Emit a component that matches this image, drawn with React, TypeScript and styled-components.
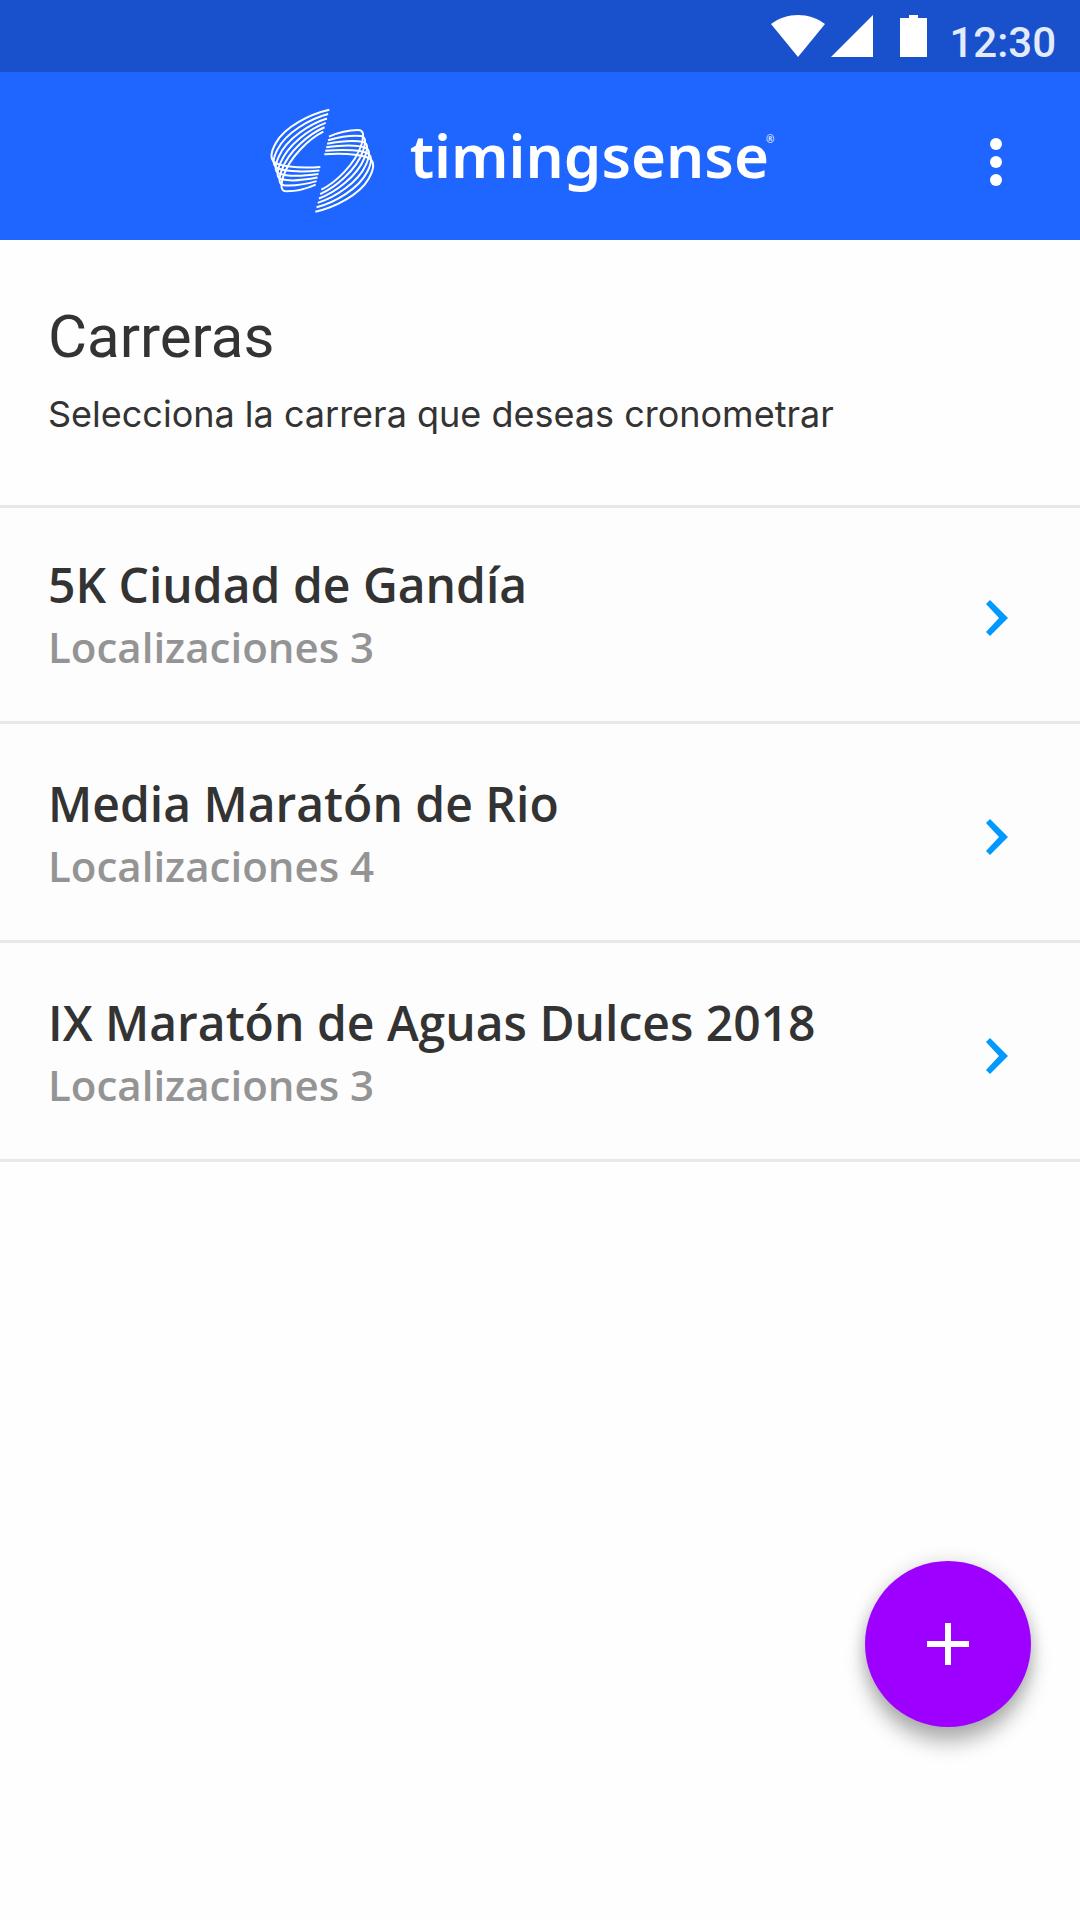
import React from "react";
import styled, { createGlobalStyle } from "styled-components";

const GlobalStyle = createGlobalStyle`
  *, *::before, *::after { box-sizing: border-box; }
  body {
    margin: 0;
    background: #fefefe;
    color: #333333;
    font-family: "Open Sans", "Noto Sans", sans-serif;
  }
  h1, h2, p, ul { margin: 0; padding: 0; }
`;

const Page = styled.div`
  min-height: 100vh;
`;

const StatusBar = styled.div`
  display: flex;
  align-items: flex-start;
  justify-content: flex-end;
  height: 72px;
  padding: 15px 24px 0 0;
  background: #1951cc;
  color: #ffffff;
`;

const StatusIcon = styled.svg<{ $gap: number }>`
  display: block;
  flex: none;
  margin-right: ${(p) => p.$gap}px;
  fill: currentColor;
`;

const Clock = styled.time`
  color: #e3ebfb;
  font: 500 42px/56px Roboto, sans-serif;
`;

const AppBar = styled.header`
  display: grid;
  grid-template-columns: 1fr auto 1fr;
  align-items: center;
  height: 168px;
  padding-top: 12px;
  padding-right: 36px;
  background: #1e66ff;
  color: #ffffff;
`;

const Brand = styled.a`
  grid-column: 2;
  display: flex;
  align-items: center;
  gap: 35px;
  padding-bottom: 4px;
  color: inherit;
  text-decoration: none;
`;

const Wordmark = styled.span`
  display: flex;
  align-items: flex-start;
  padding-bottom: 10px;
  font: 600 60px/72px "Noto Sans", sans-serif;
`;

const Registered = styled.span`
  margin-left: -3px;
  padding-top: 12px;
  font: 400 10px/16px "Noto Sans", sans-serif;
`;

const MenuButton = styled.button`
  display: grid;
  place-items: center;
  justify-self: end;
  width: 96px;
  height: 96px;
  padding: 0;
  border: 0;
  background: none;
  color: inherit;
  cursor: pointer;
`;

const Intro = styled.section`
  padding: 61px 48px 67px;
`;

const Heading = styled.h1`
  font: 400 60px/72px Roboto, sans-serif;
`;

const Hint = styled.p`
  margin-top: 17px;
  font: 400 36px/48px Inter, sans-serif;
`;

const RaceList = styled.ul`
  list-style: none;
  background: #fdfdfd;
  box-shadow: inset 0 3px 0 #e8e8e8;
`;

const RaceItem = styled.li`
  border-bottom: 3px solid #e8e8e8;
`;

const RaceLink = styled.a`
  display: flex;
  align-items: center;
  justify-content: space-between;
  padding: 47px 72px 46px 48px;
  color: inherit;
  text-decoration: none;
`;

const RaceName = styled.h2`
  font-weight: 600;
  font-size: 48px;
  line-height: 66px;
`;

const RaceDetail = styled.p`
  color: #949494;
  font-weight: 600;
  font-size: 42px;
  line-height: 57px;
`;

const Chevron = styled.svg`
  flex: none;
  margin-top: 8px;
  fill: #0099ff;
`;

const AddButton = styled.button`
  position: fixed;
  right: 49px;
  bottom: 193px;
  display: grid;
  place-items: center;
  width: 166px;
  height: 166px;
  padding: 0;
  border: 0;
  border-radius: 50%;
  background: #9e00ff;
  color: #ffffff;
  box-shadow: 0 16px 20px rgba(0, 0, 0, 0.28), 0 0 18px rgba(0, 0, 0, 0.14);
  cursor: pointer;
`;

/* Outermost and innermost strands of the emblem; the rest are spread evenly between them. */
const outerStrand = [208, 29, 150, 42, 75, 80, 48, 128, 32, 156, 30, 172, 40, 184, 52, 198, 110, 206, 181, 201];
const innerStrand = [190, 95, 150, 115, 88, 170, 69, 232, 62, 258, 62, 274, 80, 274, 115, 274, 145, 264, 167, 254];
const strandCount = 6;

const strands = Array.from({ length: strandCount }, (_, i) => {
  const t = i / (strandCount - 1);
  const p = outerStrand.map((v, k) => v + (innerStrand[k] - v) * t);
  return `M${p.slice(0, 2).join(" ")}C${p.slice(2).join(" ")}`;
});

function Emblem() {
  return (
    <svg width="105" height="105" viewBox="30 24 315 315" fill="none" stroke="currentColor" strokeWidth="6" aria-hidden="true">
      <g id="swoosh">
        {strands.map((d) => (
          <path key={d} d={d} />
        ))}
      </g>
      <use href="#swoosh" transform="rotate(180 187 182)" />
    </svg>
  );
}

const races = [
  { name: "5K Ciudad de Gandía", locations: 3 },
  { name: "Media Maratón de Rio", locations: 4 },
  { name: "IX Maratón de Aguas Dulces 2018", locations: 3 },
];

export default function App() {
  return (
    <Page>
      <GlobalStyle />
      <StatusBar>
        <StatusIcon $gap={6} width="54" height="42" viewBox="0 0 54 42" aria-hidden="true">
          <path d="M0 9C16 -3 38 -3 54 9L27 42Z" />
        </StatusIcon>
        <StatusIcon $gap={27} width="42" height="42" viewBox="0 0 42 42" aria-hidden="true">
          <path d="M42 0V42H0Z" />
        </StatusIcon>
        <StatusIcon $gap={22} width="27" height="42" viewBox="0 0 27 42" aria-hidden="true">
          <path d="M9 0H18V3H27V42H0V3H9Z" />
        </StatusIcon>
        <Clock>12:30</Clock>
      </StatusBar>
      <AppBar>
        <Brand href="#">
          <Emblem />
          <Wordmark>
            timingsense<Registered>®</Registered>
          </Wordmark>
        </Brand>
        <MenuButton type="button" aria-label="Menú">
          <svg width="12" height="48" viewBox="0 0 12 48" fill="currentColor" aria-hidden="true">
            <circle cx="6" cy="6" r="6" />
            <circle cx="6" cy="24" r="6" />
            <circle cx="6" cy="42" r="6" />
          </svg>
        </MenuButton>
      </AppBar>
      <main>
        <Intro>
          <Heading>Carreras</Heading>
          <Hint>Selecciona la carrera que deseas cronometrar</Hint>
        </Intro>
        <RaceList>
          {races.map((race) => (
            <RaceItem key={race.name}>
              <RaceLink href="#">
                <div>
                  <RaceName>{race.name}</RaceName>
                  <RaceDetail>Localizaciones {race.locations}</RaceDetail>
                </div>
                <Chevron width="22" height="36" viewBox="0 0 22 36" aria-hidden="true">
                  <path d="M4 0L22 18L4 36L0 32L13 18L0 4Z" />
                </Chevron>
              </RaceLink>
            </RaceItem>
          ))}
        </RaceList>
      </main>
      <AddButton type="button" aria-label="Añadir carrera">
        <svg width="42" height="42" viewBox="0 0 42 42" fill="currentColor" aria-hidden="true">
          <path d="M18 0H24V18H42V24H24V42H18V24H0V18H18Z" />
        </svg>
      </AddButton>
    </Page>
  );
}
